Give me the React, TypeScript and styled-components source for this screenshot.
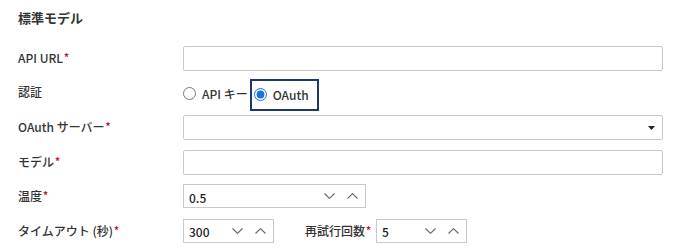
import React from "react";
import styled, { createGlobalStyle } from "styled-components";

const GlobalStyle = createGlobalStyle`
  html, body {
    margin: 0;
    padding: 0;
    background: #ffffff;
  }
  body {
    font-family: "Noto Sans CJK JP", "Noto Sans", sans-serif;
    color: #333333;
  }
  * { box-sizing: border-box; }
`;

const Page = styled.div`
  padding: 8px 18px 0 18px;
  width: 677px;
  height: 252px;
  overflow: hidden;
`;

const Title = styled.h2`
  margin: 0 0 18px 0;
  font-size: 13px;
  line-height: 20px;
  font-weight: 700;
  color: #333333;
`;

const Form = styled.div`
  display: grid;
  grid-template-columns: 165px 480px;
  grid-auto-rows: 25px;
  row-gap: 9.6px;
`;

const Label = styled.div`
  font-size: 12px;
  line-height: 20px;
  padding-top: 1px;
  font-weight: 500;
  color: #333333;
  white-space: nowrap;
`;

const Req = styled.span`
  color: #c8102e;
  font-size: 10px;
  font-weight: 700;
  vertical-align: 2px;
  margin-left: 1px;
`;

const TextInput = styled.input`
  width: 100%;
  height: 25px;
  border: 1px solid #c9c9c9;
  border-radius: 2px;
  background: #fff;
  padding: 0 6px;
  font: inherit;
  font-size: 12px;
  outline: none;
`;

const RadioGroup = styled.div`
  display: flex;
  align-items: center;
  height: 25px;
`;

const RadioOption = styled.label<{ $focused?: boolean }>`
  display: flex;
  align-items: center;
  gap: 6px;
  font-size: 12px;
  font-weight: 500;
  color: #333333;
  height: ${(p) => (p.$focused ? "32px" : "25px")};
  margin-top: ${(p) => (p.$focused ? "3px" : "0")};
  padding: ${(p) => (p.$focused ? "0 8px 0 2px" : "0 2px 0 0")};
  border: ${(p) => (p.$focused ? "2px solid #1d3966" : "none")};
  white-space: nowrap;
`;

const Radio = styled.input`
  margin: 0;
  width: 13px;
  height: 13px;
  accent-color: #1a73e8;
`;

const SelectFrame = styled.div`
  height: 25px;
  border: 1px solid #c9c9c9;
  border-radius: 2px;
  display: flex;
  align-items: center;
  justify-content: flex-end;
  padding-right: 7px;
  background: #fff;
`;

const InlineRow = styled.div`
  display: flex;
  align-items: flex-start;
`;

const Spinner = styled.div<{ $w: number }>`
  width: ${(p) => p.$w}px;
  height: 24px;
  border: 1px solid #c9c9c9;
  display: flex;
  align-items: center;
  padding: 0 7px 0 5px;
  gap: 12px;
  background: #fff;
`;

const SpinValue = styled.span`
  flex: 1;
  font-size: 12px;
  font-weight: 500;
  color: #222;
  padding-top: 2px;
`;

const SideLabel = styled(Label)`
  margin-left: 31px;
  margin-right: 5px;
`;

const Chevron = ({ up }: { up?: boolean }) => (
  <svg width="11" height="6" viewBox="0 0 11 6">
    <polyline
      points={up ? "0.5,5.5 5.5,0.6 10.5,5.5" : "0.5,0.5 5.5,5.4 10.5,0.5"}
      fill="none"
      stroke="#666"
      strokeWidth="1.1"
    />
  </svg>
);

const NumberSpinner = ({ value, width }: { value: string; width: number }) => (
  <Spinner $w={width}>
    <SpinValue>{value}</SpinValue>
    <Chevron />
    <Chevron up />
  </Spinner>
);

export default function App() {
  return (
    <>
      <GlobalStyle />
      <Page>
        <Title>標準モデル</Title>
        <Form>
          <Label>
            API URL<Req>*</Req>
          </Label>
          <TextInput type="text" />

          <Label>認証</Label>
          <RadioGroup>
            <RadioOption>
              <Radio type="radio" name="auth" />
              API キー
            </RadioOption>
            <RadioOption $focused>
              <Radio type="radio" name="auth" defaultChecked />
              OAuth
            </RadioOption>
          </RadioGroup>

          <Label>
            OAuth サーバー<Req>*</Req>
          </Label>
          <SelectFrame>
            <svg width="7" height="4" viewBox="0 0 7 4">
              <polygon points="0,0 7,0 3.5,4" fill="#222" />
            </svg>
          </SelectFrame>

          <Label>
            モデル<Req>*</Req>
          </Label>
          <TextInput type="text" />

          <Label>
            温度<Req>*</Req>
          </Label>
          <InlineRow>
            <NumberSpinner value="0.5" width={183} />
          </InlineRow>

          <Label>
            タイムアウト (秒)<Req>*</Req>
          </Label>
          <InlineRow>
            <NumberSpinner value="300" width={91} />
            <SideLabel>
              再試行回数<Req>*</Req>
            </SideLabel>
            <NumberSpinner value="5" width={91} />
          </InlineRow>
        </Form>
      </Page>
    </>
  );
}
